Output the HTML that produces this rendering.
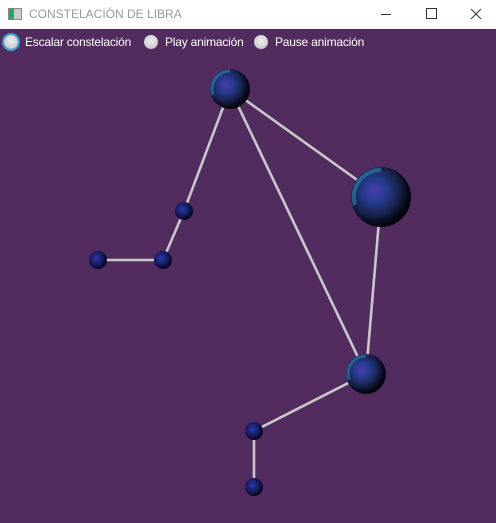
<!DOCTYPE html><html><head><style>
body{margin:0;width:496px;height:523px;overflow:hidden;background:#532c5f;font-family:"Liberation Sans",sans-serif}
.tb{position:absolute;left:0;top:0;width:496px;height:29px;background:#fff}
.tt{position:absolute;left:29px;top:7px;font-size:12px;color:#999}
.bar{position:absolute;top:35px;font-size:12px;color:#fff;letter-spacing:-0.2px}
.rb{position:absolute;top:35px;width:14px;height:14px;border-radius:50%;background:radial-gradient(circle at 50% 40%,#eee,#bdbdbd);}
</style></head><body>
<div class="tb"></div>
<div style="position:absolute;left:8px;top:8px;width:12px;height:10px;border:1px solid #888;background:linear-gradient(90deg,#2a6 0 40%,#ccc 40%)"></div>
<div class="tt">CONSTELACIÓN DE LIBRA</div>
<div style="position:absolute;left:381px;top:14px;width:10px;height:1px;background:#333"></div>
<div style="position:absolute;left:426px;top:8px;width:9px;height:9px;border:1px solid #333"></div>
<svg width="12" height="12" style="position:absolute;left:470px;top:8px"><path d="M1 1L11 11M11 1L1 11" stroke="#333" stroke-width="1"/></svg>
<div class="rb" style="left:4px;box-shadow:0 0 0 2px #2fa3d8"></div>
<div class="bar" style="left:25px">Escalar constelación</div>
<div class="rb" style="left:144px"></div>
<div class="bar" style="left:165px">Play animación</div>
<div class="rb" style="left:254px"></div>
<div class="bar" style="left:275px">Pause animación</div>
<svg width="496" height="523" style="position:absolute;left:0;top:0">
<defs><radialGradient id="g" cx="40%" cy="40%" r="60%"><stop offset="0" stop-color="#4a3fb0"/><stop offset=".35" stop-color="#243a8a"/><stop offset=".65" stop-color="#1a2450"/><stop offset=".85" stop-color="#0a0f25"/><stop offset="1" stop-color="#020408"/></radialGradient>
<radialGradient id="s" cx="40%" cy="40%" r="60%"><stop offset="0" stop-color="#2c38b0"/><stop offset=".6" stop-color="#161c60"/><stop offset="1" stop-color="#05071a"/></radialGradient></defs>
<g stroke="#c8c8c8" stroke-width="2.6" stroke-linecap="round">
<line x1="98" y1="260" x2="163" y2="260"/><line x1="163" y1="260" x2="184" y2="211"/><line x1="184" y1="211" x2="230" y2="89"/><line x1="230" y1="89" x2="381" y2="197"/><line x1="230" y1="89" x2="366" y2="374"/><line x1="381" y1="197" x2="366" y2="374"/><line x1="366" y1="374" x2="254" y2="431"/><line x1="254" y1="431" x2="254" y2="487"/></g>
<circle cx="230" cy="89" r="20" fill="url(#g)"/><circle cx="381" cy="197" r="30" fill="url(#g)"/><circle cx="366" cy="374" r="20" fill="url(#g)"/>
<g fill="none" stroke="#2aa0c0" stroke-opacity=".5"><path d="M213 95A18 18 0 0 1 230 71" stroke-width="3"/><path d="M355 205A27 27 0 0 1 381 170" stroke-width="4"/><path d="M349 380A18 18 0 0 1 366 356" stroke-width="3"/></g>
<circle cx="184" cy="211" r="9" fill="url(#s)"/><circle cx="163" cy="260" r="9" fill="url(#s)"/><circle cx="98" cy="260" r="9" fill="url(#s)"/><circle cx="254" cy="431" r="9" fill="url(#s)"/><circle cx="254" cy="487" r="9" fill="url(#s)"/>
</svg>
</body></html>
